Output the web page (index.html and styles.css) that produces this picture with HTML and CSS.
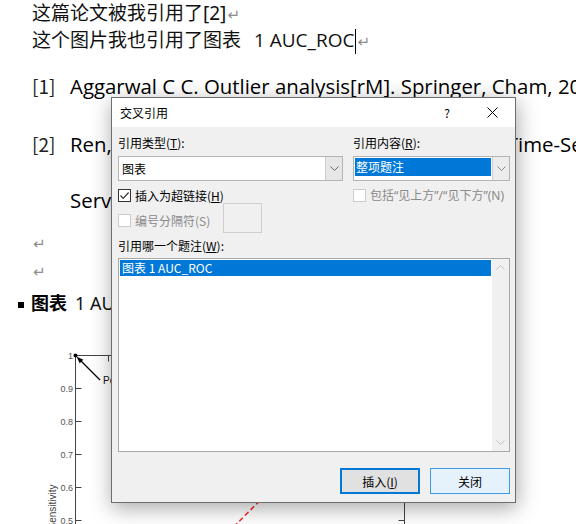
FILE: index.html
```html
<!DOCTYPE html>
<html lang="zh-CN">
<head>
<meta charset="utf-8">
<title>交叉引用</title>
<link rel="stylesheet" href="styles.css">
</head>
<body>
<div class="doc">
  <p class="cn">这篇论文被我引用了[2]<span class="pm">↵</span></p>
  <p class="cn">这个图片我也引用了图表 <span class="num">1 AUC_ROC</span><span class="caret"></span><span class="pm">↵</span></p>
  <div class="ref">
    <span class="ref-no">[1]</span>
    <div class="ref-text">Aggarwal C C. Outlier analysis[rM]. Springer, Cham, 2017.</div>
  </div>
  <div class="ref ref-second">
    <span class="ref-no">[2]</span>
    <div class="ref-text"><span class="justified">Ren, H., Xu, B., Wang, Y., et al. Time-Series Anomaly Detection</span><br>Service at Microsoft[C]. KDD 2019.</div>
  </div>
  <p class="cn empty"><span class="pm">↵</span></p>
  <p class="cn empty"><span class="pm">↵</span></p>
  <p class="caption"><span class="keep"></span><b>图表</b> <span class="cap-num">1 AUC_ROC</span></p>
</div>
<svg class="chart" width="576" height="204" viewBox="0 320 576 204">
  <line x1="75.5" y1="685.5" x2="404.5" y2="355.5" stroke="#ff1f1f" stroke-width="1.5" stroke-dasharray="5 3"/>
  <path d="M75.5 524 V355.5 H404.5 V524" fill="none" stroke="#444" stroke-width="1"/>
  <path d="M75.5 388.5h6 M75.5 421.5h6 M75.5 454.5h6 M75.5 487.5h6 M75.5 520.5h6 M108.5 355.5v6 M404.5 520.5h-6" stroke="#444" stroke-width="1"/>
  <g class="tick-labels" text-anchor="end">
    <text x="73" y="358.5">1</text>
    <text x="73" y="391.5">0.9</text>
    <text x="73" y="424.5">0.8</text>
    <text x="73" y="457.5">0.7</text>
    <text x="73" y="490.5">0.6</text>
    <text x="73" y="523.5">0.5</text>
  </g>
  <text class="axis-title" transform="translate(56 507) rotate(-90)" text-anchor="middle">Sensitivity</text>
  <circle cx="75.5" cy="355.5" r="2" fill="#000"/>
  <line x1="100" y1="380" x2="80" y2="360" stroke="#000" stroke-width="1.3"/>
  <path d="M76.5 356.5 L83.3 359.7 L79.7 363.3 Z" fill="#000"/>
  <text class="point-label" x="103" y="384">Pe</text>
</svg>

<div class="dialog">
  <div class="titlebar">
    <span class="title">交叉引用</span>
    <span class="help">?</span>
    <svg class="close-x" width="11" height="11" viewBox="0 0 11 11"><path d="M0.5 0.5 L10.5 10.5 M10.5 0.5 L0.5 10.5" stroke="#000" stroke-width="1"/></svg>
  </div>
  <div class="dlg-body">
    <div class="cols">
      <div class="col col-left">
        <div class="lbl">引用类型(<u>T</u>):</div>
        <div class="combo">
          <span class="combo-val">图表</span>
          <span class="combo-btn"><svg width="9" height="5" viewBox="0 0 9 5"><path d="M0.5 0.5 L4.5 4.5 L8.5 0.5" fill="none" stroke="#666" stroke-width="1"/></svg></span>
        </div>
        <div class="chk-row">
          <span class="chk"><svg width="11" height="11" viewBox="0 0 11 11"><path d="M1.5 5.5 L4.2 8.3 L9.6 2.5" fill="none" stroke="#333" stroke-width="1.2"/></svg></span>
          <span>插入为超链接(<u>H</u>)</span>
        </div>
        <div class="sep-row">
          <div class="chk-row disabled sep-check">
            <span class="chk"></span>
            <span>编号分隔符(S)</span>
          </div>
          <span class="textbox"></span>
        </div>
      </div>
      <div class="col col-right">
        <div class="lbl">引用内容(<u>R</u>):</div>
        <div class="combo combo-sel">
          <span class="combo-val"><span class="hl">整项题注</span></span>
          <span class="combo-btn"><svg width="9" height="5" viewBox="0 0 9 5"><path d="M0.5 0.5 L4.5 4.5 L8.5 0.5" fill="none" stroke="#888" stroke-width="1"/></svg></span>
        </div>
        <div class="chk-row disabled">
          <span class="chk"></span>
          <span class="mixed">包括“见上方”/“见下方”(N)</span>
        </div>
      </div>
    </div>
    <div class="lbl list-lbl">引用哪一个题注(<u>W</u>):</div>
    <div class="listbox">
      <div class="items">
        <div class="item selected">图表 1 AUC_ROC</div>
      </div>
      <div class="vscroll">
        <span class="sb-btn"><svg width="9" height="5" viewBox="0 0 9 5"><path d="M0.5 4.5 L4.5 0.5 L8.5 4.5" fill="none" stroke="#c2c2c2" stroke-width="1"/></svg></span>
        <span class="sb-btn"><svg width="9" height="5" viewBox="0 0 9 5"><path d="M0.5 0.5 L4.5 4.5 L8.5 0.5" fill="none" stroke="#c2c2c2" stroke-width="1"/></svg></span>
      </div>
    </div>
    <div class="btns">
      <button class="btn btn-default">插入(<u>I</u>)</button>
      <button class="btn btn-hover">关闭</button>
    </div>
  </div>
</div>
</body>
</html>
```

FILE: styles.css
```css
html, body {
  margin: 0;
  padding: 0;
  overflow: hidden;
}

body {
  position: relative;
  width: 576px;
  height: 524px;
  background: #fff;
  font-family: "Noto Sans CJK SC", "Noto Sans", sans-serif;
  color: #111;
}

.doc {
  padding-left: 32px;
  white-space: nowrap;
}

.cn {
  margin: 0;
  height: 27px;
  font-family: "Noto Sans", "Noto Sans CJK SC", sans-serif;
  font-size: 19px;
  line-height: 27px;
  overflow: visible;
}

.cn.empty {
  height: 28px;
  line-height: 28px;
}

.num {
  font-family: "Open Sans", "Noto Sans", sans-serif;
  font-size: 19px;
  margin-left: 8px;
}

.pm {
  font-family: "DejaVu Sans", sans-serif;
  font-size: 15px;
  color: #8c8c8c;
  margin-left: 1px;
}

.caret {
  display: inline-block;
  width: 1px;
  height: 25px;
  background: #000;
  vertical-align: middle;
  margin-left: 1px;
}

.ref {
  display: flex;
  align-items: flex-start;
  height: 56px;
  margin-top: 4px;
}

.ref-second {
  height: 112px;
  margin-top: 2px;
}

.ref-no {
  width: 38px;
  flex: none;
  font-size: 19px;
  line-height: 56px;
  color: #222;
}

.ref-text {
  font-family: "Open Sans", "Noto Sans", sans-serif;
  font-size: 20.4px;
  line-height: 56px;
  color: #000;
}

.justified {
  word-spacing: 19px;
}

.caption {
  margin: 0;
  height: 36px;
  font-size: 18px;
  line-height: 36px;
  color: #111;
}

.cap-num {
  font-family: "Noto Sans", sans-serif;
  margin-left: 4px;
}

.caption b {
  font-weight: 700;
  color: #000;
}

.keep {
  display: inline-block;
  width: 6px;
  height: 6px;
  background: #000;
  margin-left: -14px;
  margin-right: 7px;
  vertical-align: middle;
}

.chart {
  display: block;
}

.tick-labels {
  font-family: "Liberation Sans", Arial, sans-serif;
  font-size: 9px;
  fill: #555;
}

.axis-title {
  font-family: "Liberation Sans", Arial, sans-serif;
  font-size: 10px;
  fill: #444;
}

.point-label {
  font-family: "Liberation Sans", Arial, sans-serif;
  font-size: 10px;
  fill: #111;
}

/* ---------- dialog ---------- */
.dialog {
  position: absolute;
  left: 111px;
  top: 97px;
  width: 405px;
  height: 406px;
  box-sizing: border-box;
  border: 1px solid #6e6e6e;
  background: #f0f0f0;
  box-shadow: 1px 5px 20px rgba(0, 0, 0, 0.35);
  display: flex;
  flex-direction: column;
  font-family: "Noto Sans CJK SC", sans-serif;
  font-size: 12px;
  color: #000;
}

.titlebar {
  height: 29px;
  flex: none;
  background: #fff;
  display: flex;
  align-items: center;
  padding-left: 8px;
}

.title {
  flex: 1;
}

.help {
  width: 8px;
  text-align: center;
  margin-right: 36px;
  font-size: 12px;
}

.close-x {
  margin-right: 17px;
}

.dlg-body {
  flex: 1;
  display: flex;
  flex-direction: column;
  padding: 8px 5px 8px 6px;
}

.cols {
  display: flex;
  align-items: flex-start;
  gap: 10px;
}

.col {
  display: flex;
  flex-direction: column;
}

.col-left {
  width: 225px;
}

.col-right {
  width: 157px;
}

.lbl {
  height: 16px;
  line-height: 16px;
}

.combo {
  margin-top: 5px;
  height: 25px;
  box-sizing: border-box;
  border: 1px solid #b4b4b4;
  background: #fff;
  display: flex;
}

.combo-val {
  flex: 1;
  padding-left: 3px;
  line-height: 23px;
}

.combo-sel .combo-val {
  padding: 1px 1px 0 1px;
}

.hl {
  display: block;
  height: 18px;
  line-height: 18px;
  background: #0078d7;
  color: #fff;
  padding-left: 1px;
}

.combo-btn {
  width: 16px;
  border-left: 1px solid #cdcdcd;
  background: #e6e6e6;
  display: flex;
  align-items: center;
  justify-content: center;
}

.combo-sel .combo-btn {
  background: #ececec;
}

.chk-row {
  margin-top: 8px;
  height: 13px;
  line-height: 13px;
  display: flex;
  align-items: center;
  gap: 4px;
  white-space: nowrap;
}

.chk {
  width: 13px;
  height: 13px;
  box-sizing: border-box;
  border: 1px solid #333;
  background: #fff;
  flex: none;
  display: flex;
  align-items: center;
  justify-content: center;
}

.chk-row.disabled {
  color: #8a8a8a;
}

.chk-row.disabled .chk {
  border-color: #cccccc;
}

.mixed {
  font-family: "Noto Sans", "Noto Sans CJK SC", sans-serif;
}

.sep-row {
  margin-top: -2px;
  height: 33px;
  display: flex;
  align-items: flex-end;
}

.sep-check {
  margin-bottom: 6px;
  width: 105px;
}

.textbox {
  width: 39px;
  height: 30px;
  box-sizing: border-box;
  border: 1px solid #cfcfcf;
  background: #f0f0f0;
}

.list-lbl {
  margin-top: 5px;
}

.listbox {
  margin-top: 4px;
  height: 194px;
  box-sizing: border-box;
  border: 1px solid #a9a9a9;
  background: #fff;
  display: flex;
}

.items {
  flex: 1;
  padding: 1px;
}

.item {
  height: 16px;
  line-height: 16px;
  padding-left: 2px;
}

.item.selected {
  background: #0078d7;
  color: #fff;
}

.vscroll {
  width: 17px;
  background: #f0f0f0;
  display: flex;
  flex-direction: column;
  justify-content: space-between;
}

.sb-btn {
  height: 17px;
  display: flex;
  align-items: center;
  justify-content: center;
}

.btns {
  margin-top: 16px;
  display: flex;
  justify-content: flex-end;
  gap: 10px;
}

.btn {
  width: 80px;
  height: 26px;
  box-sizing: border-box;
  font-family: "Noto Sans CJK SC", sans-serif;
  font-size: 12px;
  color: #000;
  padding: 0;
  margin: 0;
}

.btn-default {
  background: #e1e1e1;
  border: 2px solid #0078d7;
}

.btn-hover {
  background: #e5f1fb;
  border: 1px solid #3c9ae6;
}
```
